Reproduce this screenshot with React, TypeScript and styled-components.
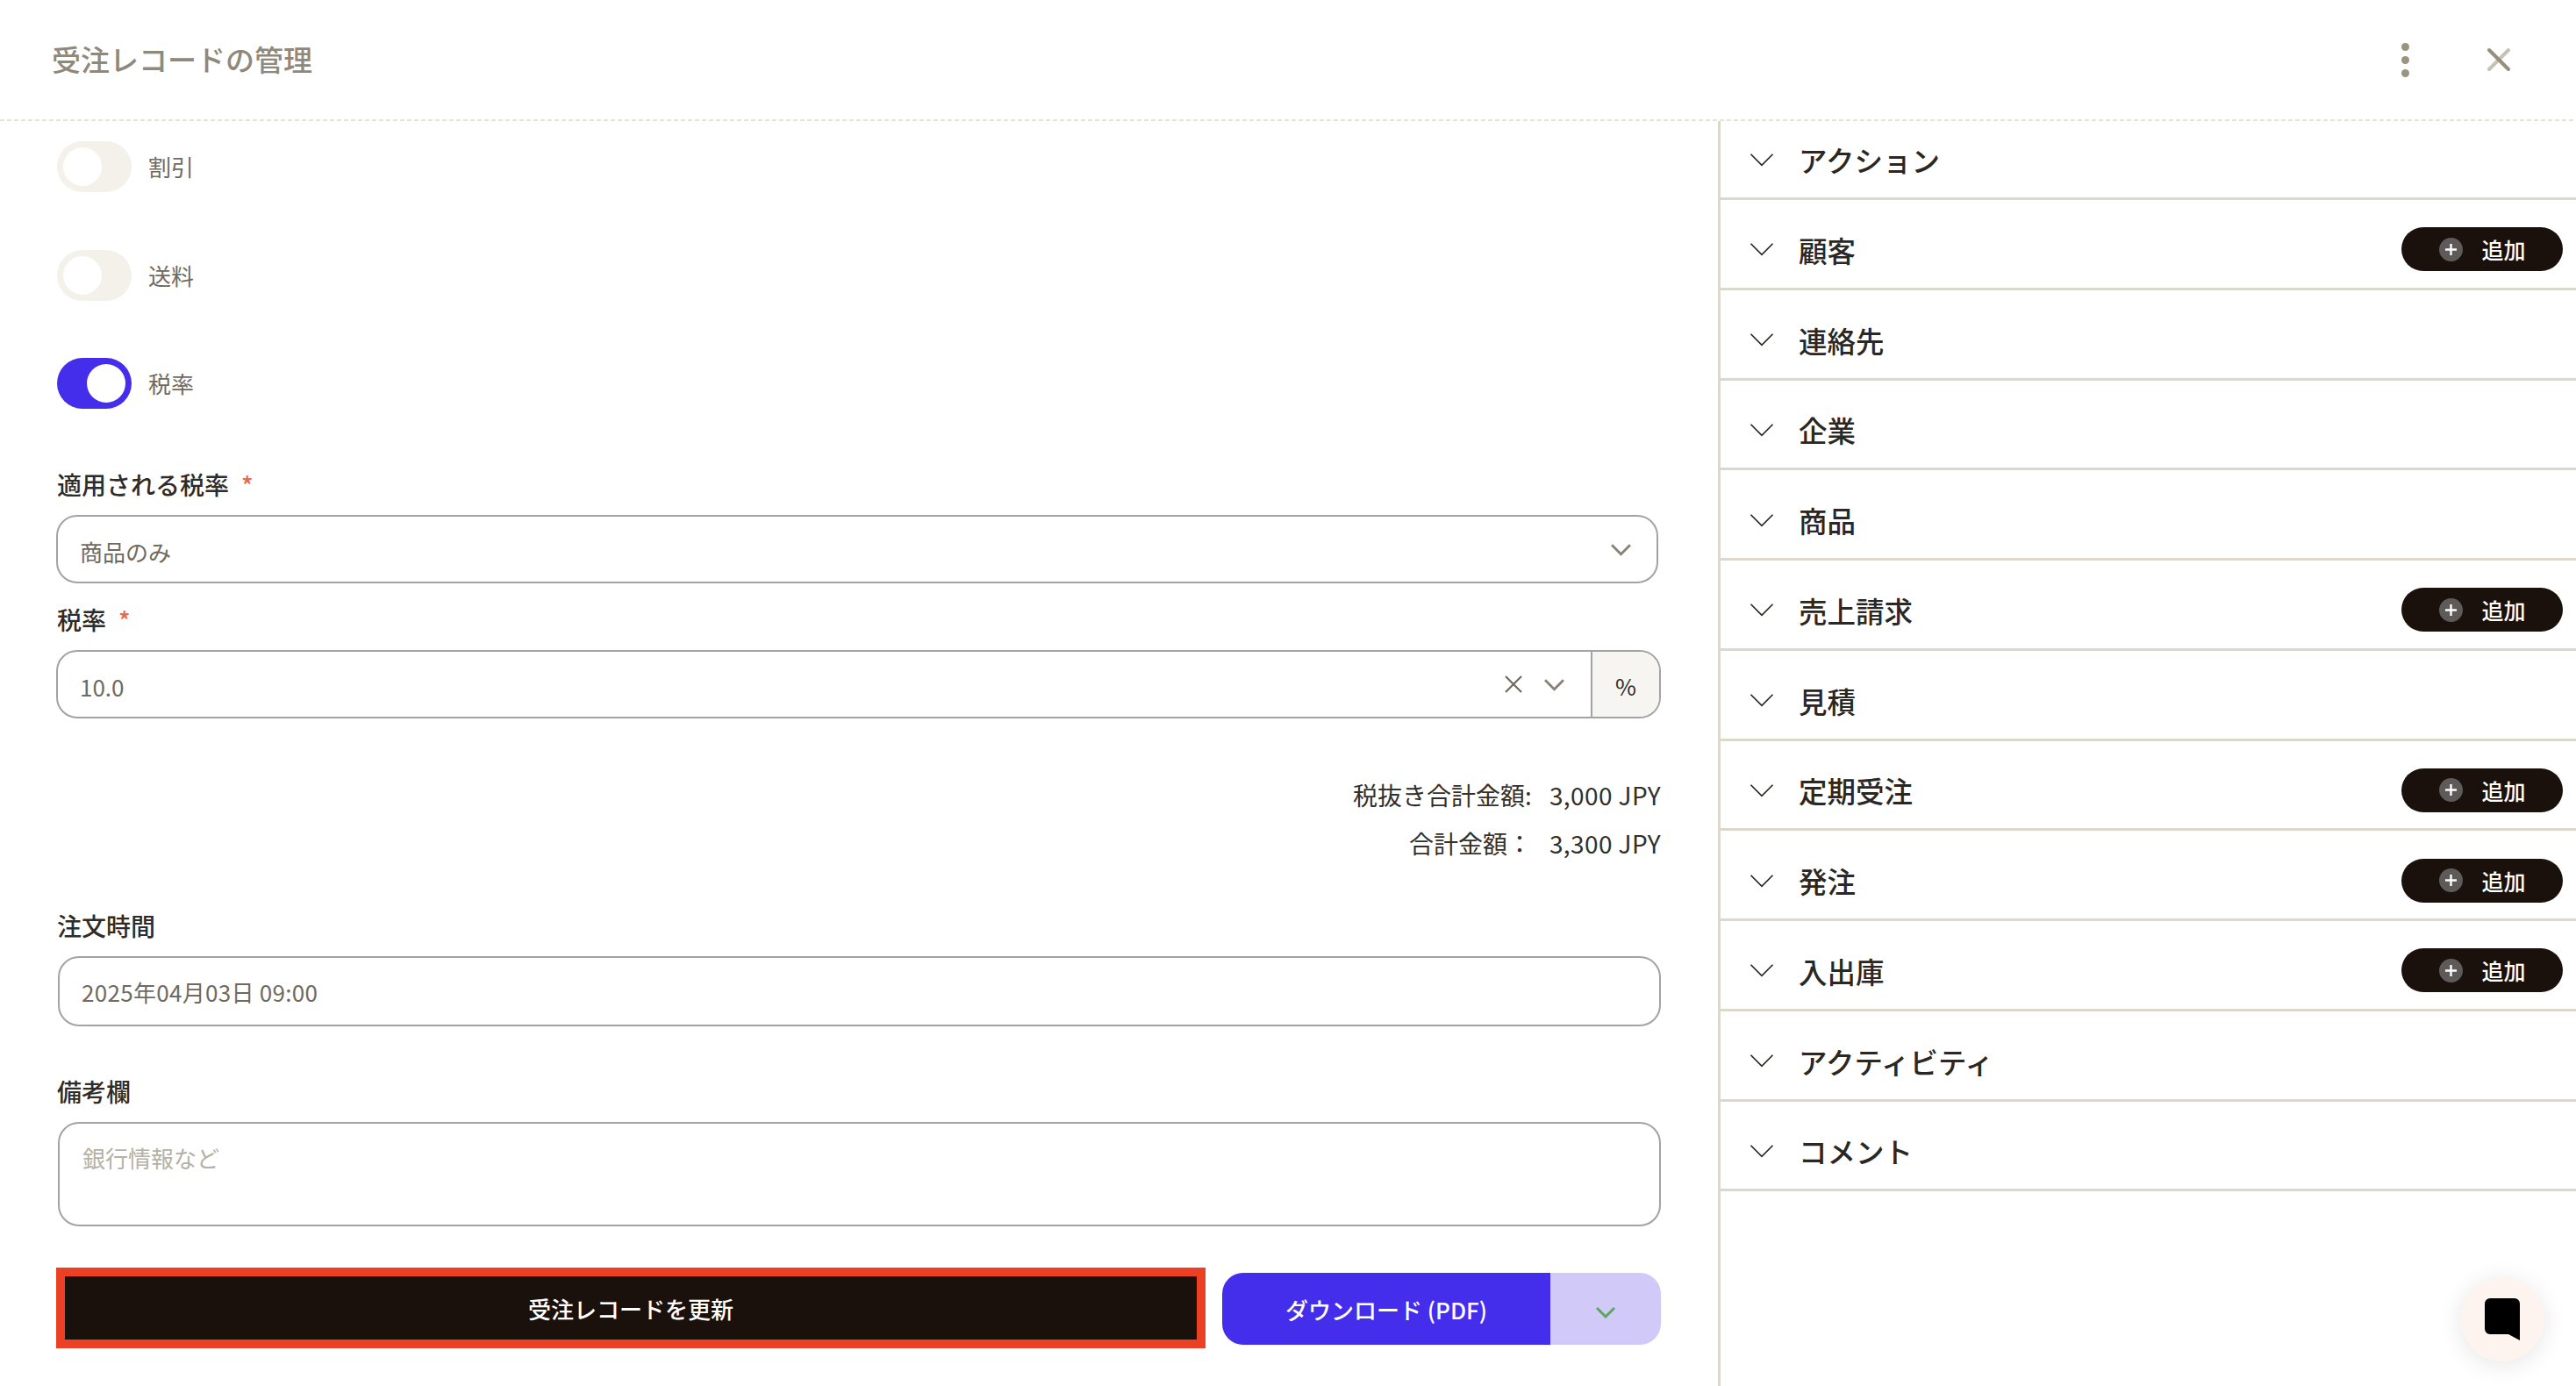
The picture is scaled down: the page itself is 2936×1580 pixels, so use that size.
import styled, { createGlobalStyle } from "styled-components";

const rows = [
  { name: "アクション" },
  { name: "顧客", add: true },
  { name: "連絡先" },
  { name: "企業" },
  { name: "商品" },
  { name: "売上請求", add: true },
  { name: "見積" },
  { name: "定期受注", add: true },
  { name: "発注", add: true },
  { name: "入出庫", add: true },
  { name: "アクティビティ" },
  { name: "コメント" },
];

const toggles = [
  { label: "割引", on: false },
  { label: "送料", on: false },
  { label: "税率", on: true },
];

const Chevron = ({ color, size = 24, width = 2.4 }: { color: string; size?: number; width?: number }) => (
  <svg width={size} height={size} viewBox="0 0 24 24" fill="none">
    <path d="M2 7l10 10L22 7" stroke={color} strokeWidth={width} />
  </svg>
);

const App = () => {
  return (
    <Page>
      <GlobalStyle />
      <Header>
        <Title>受注レコードの管理</Title>
        <HeaderIcons>
          <Dots>
            <i />
            <i />
            <i />
          </Dots>
          <svg width="28" height="28" viewBox="0 0 28 28" fill="none">
            <path d="M25 3L3 25" stroke="#c4c2b7" strokeWidth="4" strokeLinecap="round" />
            <path d="M3 3l22 22" stroke="#968d7d" strokeWidth="4" strokeLinecap="round" />
          </svg>
        </HeaderIcons>
      </Header>
      <Body>
        <Left>
          <ToggleList>
            {toggles.map((t) => (
              <ToggleRow key={t.label}>
                <Toggle $on={t.on}>
                  <Knob />
                </Toggle>
                <ToggleLabel>{t.label}</ToggleLabel>
              </ToggleRow>
            ))}
          </ToggleList>

          <Label $top={66}>
            適用される税率<Star>*</Star>
          </Label>
          <Select>
            <FieldText>商品のみ</FieldText>
            <Chevron color="#8a8375" size={25} width={2.8} />
          </Select>

          <Label $top={21}>
            税率<Star>*</Star>
          </Label>
          <RateField>
            <RateInput>
              <FieldText>10.0</FieldText>
              <svg width="20" height="20" viewBox="0 0 20 20" fill="none">
                <path d="M1 1l18 18M19 1L1 19" stroke="#6f6a60" strokeWidth="2.2" />
              </svg>
              <ChevronSlot>
                <Chevron color="#8a8375" size={25} width={2.8} />
              </ChevronSlot>
            </RateInput>
            <Unit>%</Unit>
          </RateField>

          <Summary>
            <SummaryRow>
              <span>税抜き合計金額:</span>
              <SummaryValue>3,000 JPY</SummaryValue>
            </SummaryRow>
            <SummaryRow>
              <span>合計金額：</span>
              <SummaryValue>3,300 JPY</SummaryValue>
            </SummaryRow>
          </Summary>

          <Label $top={55}>注文時間</Label>
          <DateField>
            <DateText>2025年04月03日 09:00</DateText>
          </DateField>

          <Label $top={54}>備考欄</Label>
          <NoteField placeholder="銀行情報など" readOnly />

          <Actions>
            <UpdateButton>受注レコードを更新</UpdateButton>
            <Download>
              <DownloadMain>ダウンロード (PDF)</DownloadMain>
              <DownloadMore>
                <Chevron color="#5aa85a" size={24} width={3} />
              </DownloadMore>
            </Download>
          </Actions>
        </Left>
        <Right>
          {rows.map((r) => (
            <Row key={r.name}>
              <Chevron color="#2a2724" size={30} width={1.4} />
              <RowName>{r.name}</RowName>
              {r.add && (
                <AddButton>
                  <PlusCircle>
                    <svg width="15" height="15" viewBox="0 0 15 15" fill="none">
                      <path d="M7.5 1v13M1 7.5h13" stroke="#fff" strokeWidth="2.4" />
                    </svg>
                  </PlusCircle>
                  追加
                </AddButton>
              )}
            </Row>
          ))}
        </Right>
      </Body>
      <ChatButton>
        <svg width="40" height="48" viewBox="0 0 40 48" fill="#000">
          <path d="M6 0h28a6 6 0 0 1 6 6v42l-13-7H6a6 6 0 0 1-6-6V6a6 6 0 0 1 6-6z" />
        </svg>
      </ChatButton>
    </Page>
  );
};

const GlobalStyle = createGlobalStyle`
  html, body {
    margin: 0;
    padding: 0;
    background: #ffffff;
  }
  * {
    box-sizing: border-box;
  }
`;

const Page = styled.div`
  position: relative;
  width: 2936px;
  height: 1580px;
  overflow: hidden;
  background: #ffffff;
  font-family: "Noto Sans CJK JP", "Noto Sans", sans-serif;
`;

const Header = styled.div`
  height: 138px;
  padding: 0 74px 2px 59px;
  display: flex;
  align-items: center;
  justify-content: space-between;
  background: repeating-linear-gradient(90deg, #e6e2d9 0 5px, transparent 5px 8px) bottom / 100% 2px no-repeat;
`;

const Title = styled.h1`
  margin: 0;
  padding-bottom: 3px;
  font-size: 33px;
  font-weight: 500;
  color: #8f897c;
`;

const HeaderIcons = styled.div`
  display: flex;
  align-items: center;
  gap: 88px;
`;

const Dots = styled.div`
  display: flex;
  flex-direction: column;
  gap: 6px;

  i {
    display: block;
    width: 9px;
    height: 9px;
    border-radius: 50%;
    background: #9b9282;
  }
`;

const Body = styled.div`
  display: flex;
  height: 1442px;
`;

const Left = styled.div`
  width: 1958px;
  flex: none;
  padding: 23px 65px 0 64px;
  display: flex;
  flex-direction: column;
`;

const ToggleList = styled.div`
  display: flex;
  flex-direction: column;
  gap: 65.5px;
`;

const ToggleRow = styled.div`
  display: flex;
  align-items: center;
  gap: 19px;
  padding-left: 1px;
`;

const Toggle = styled.div<{ $on: boolean }>`
  width: 85px;
  height: 58px;
  border-radius: 29px;
  padding: 7px;
  display: flex;
  justify-content: ${(p) => (p.$on ? "flex-end" : "flex-start")};
  background: ${(p) => (p.$on ? "#452dec" : "#f4f0ea")};
`;

const Knob = styled.div`
  width: 44px;
  height: 44px;
  border-radius: 50%;
  background: #ffffff;
`;

const ToggleLabel = styled.span`
  font-size: 26px;
  line-height: 36px;
  color: #6f6a60;
`;

const Label = styled.label<{ $top: number }>`
  display: block;
  margin-top: ${(p) => p.$top}px;
  margin-bottom: 14px;
  padding-left: 1px;
  font-size: 28px;
  line-height: 41px;
  font-weight: 500;
  color: #2f2b27;
`;

const Star = styled.span`
  margin-left: 14px;
  color: #e8694a;
`;

const FieldText = styled.span`
  flex: 1;
  padding-top: 4px;
  font-size: 26px;
  color: #6f6a60;
`;

const DateText = styled(FieldText)`
  padding-top: 1px;
  letter-spacing: 0.3px;
`;

const Select = styled.div`
  height: 78px;
  margin-right: 3px;
  padding: 0 28px 0 25px;
  display: flex;
  align-items: center;
  border: 2px solid #a3a3a3;
  border-radius: 24px;
`;

const RateField = styled.div`
  height: 78px;
  display: flex;
  border: 2px solid #a3a3a3;
  border-radius: 24px;
  overflow: hidden;
`;

const RateInput = styled.div`
  flex: 1;
  padding: 0 0 0 25px;
  display: flex;
  align-items: center;
`;

const ChevronSlot = styled.div`
  display: flex;
  margin: 0 29px 0 24px;
`;

const Unit = styled.div`
  width: 78px;
  display: flex;
  align-items: center;
  justify-content: center;
  padding-top: 2px;
  border-left: 2px solid #a3a3a3;
  background: #f6f5f1;
  font-size: 26px;
  color: #2f2b27;
`;

const Summary = styled.div`
  margin-top: 69px;
  display: flex;
  flex-direction: column;
  gap: 18px;
  align-items: flex-end;
`;

const SummaryRow = styled.div`
  display: flex;
  justify-content: flex-end;
  gap: 20px;
  font-size: 28px;
  line-height: 37px;
  color: #33302b;
`;

const SummaryValue = styled.span`
  min-width: 127px;
  text-align: right;
  letter-spacing: 0.4px;
`;

const DateField = styled.div`
  height: 80px;
  margin-left: 2px;
  padding: 0 25px;
  display: flex;
  align-items: center;
  border: 2px solid #a3a3a3;
  border-radius: 24px;
`;

const NoteField = styled.textarea`
  display: block;
  width: calc(100% - 2px);
  height: 119px;
  margin-left: 2px;
  padding: 20px 26px;
  border: 2px solid #a3a3a3;
  border-radius: 24px;
  resize: none;
  outline: none;
  font-family: inherit;
  font-size: 26px;
  line-height: 38px;

  &::placeholder {
    color: #b5b1a5;
    opacity: 1;
  }
`;

const Actions = styled.div`
  margin-top: 47px;
  display: flex;
  align-items: center;
  gap: 19px;
`;

const UpdateButton = styled.button`
  width: 1310px;
  height: 92px;
  border: 10px solid #ec4024;
  background: #1b110c;
  color: #ffffff;
  font-family: inherit;
  font-size: 26px;
  font-weight: 500;
`;

const Download = styled.div`
  flex: 1;
  height: 82px;
  margin-top: 2px;
  display: flex;
  border-radius: 24px;
  overflow: hidden;
`;

const DownloadMain = styled.div`
  width: 374px;
  display: flex;
  align-items: center;
  justify-content: center;
  background: #452dec;
  color: #ffffff;
  font-size: 26px;
  font-weight: 500;
`;

const DownloadMore = styled.div`
  flex: 1;
  display: flex;
  align-items: center;
  justify-content: center;
  background: #d1caf9;
  padding-top: 8px;
`;

const Right = styled.div`
  flex: 1;
  border-left: 3px solid #dcd8cc;
  display: flex;
  flex-direction: column;
`;

const Row = styled.div`
  height: 102.75px;
  flex: none;
  padding: 13px 15px 0 32px;
  display: flex;
  align-items: center;
  border-bottom: 3px solid #dcd8cc;

  &:first-child {
    height: 90px;
    padding-top: 0;
  }
`;

const RowName = styled.span`
  flex: 1;
  margin-left: 27px;
  font-size: 32.5px;
  font-weight: 500;
  color: #2a2724;
`;

const AddButton = styled.button`
  width: 184px;
  height: 50px;
  padding: 0 0 0 1px;
  border: none;
  border-radius: 25px;
  display: flex;
  align-items: center;
  justify-content: center;
  gap: 21px;
  background: #1b110c;
  color: #ffffff;
  font-family: inherit;
  font-size: 25px;
  font-weight: 500;
`;

const PlusCircle = styled.span`
  width: 27px;
  height: 27px;
  border-radius: 50%;
  display: flex;
  align-items: center;
  justify-content: center;
  background: #5f5a5a;
`;

const ChatButton = styled.div`
  position: absolute;
  left: 2804px;
  top: 1456px;
  width: 96px;
  height: 96px;
  border-radius: 50%;
  display: flex;
  align-items: center;
  justify-content: center;
  background: #fdf3ef;
  box-shadow: 0 4px 28px rgba(0, 0, 0, 0.1);
`;

export default App;
